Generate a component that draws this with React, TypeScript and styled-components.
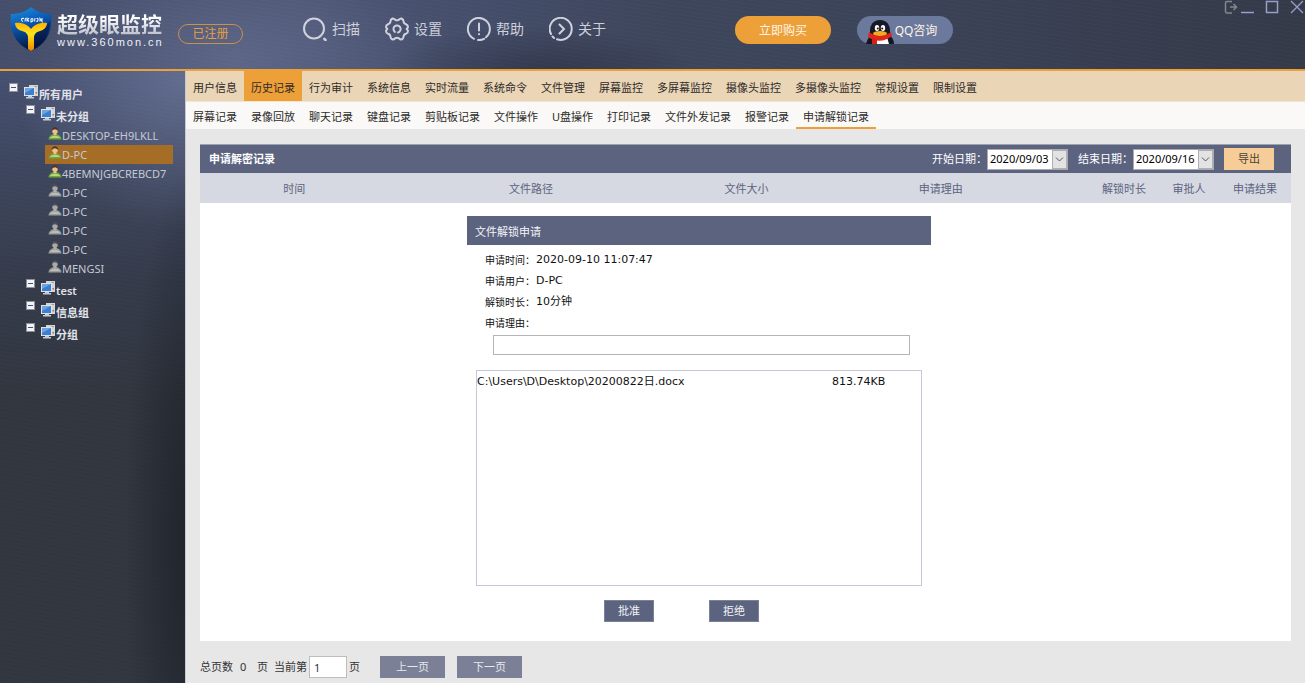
import React from 'react';
import styled, { createGlobalStyle, css } from 'styled-components';

const SANS = '"Noto Sans", "Noto Sans CJK SC", sans-serif';
const WIDE = '"DejaVu Sans", "Noto Sans CJK SC", sans-serif';

const colors = {
  orange: '#ed9f38',
  sand: '#ead5b6',
  slate: '#5c637f',
  paleSlate: '#d6d9e2',
  page: '#e7e7e7',
};

const GlobalStyle = createGlobalStyle`
  * { box-sizing: border-box; }
  body { margin: 0; font-family: ${SANS}; font-size: 11px; line-height: 14px; color: #222; }
  button, input { font: inherit; color: inherit; margin: 0; }
  button { padding: 0; border: 0; background: none; cursor: pointer; }
  ul { list-style: none; margin: 0; padding: 0; }
`;

const Shell = styled.div`
  min-height: 100vh;
  display: flex;
  flex-direction: column;
  background: #323742;
`;

/* ---------- header ---------- */

const Header = styled.header`
  height: 71px;
  display: flex;
  align-items: flex-start;
  border-bottom: 2px solid ${colors.orange};
  background:
    repeating-linear-gradient(8deg, rgba(255, 255, 255, 0.015) 0 1px, transparent 1px 4px),
    radial-gradient(ellipse 200px 110px at 235px 60px, rgba(116, 126, 164, 0.45), transparent),
    radial-gradient(ellipse 160px 50px at 540px 75px, rgba(38, 42, 56, 0.6), transparent),
    linear-gradient(90deg, #454e6a 0, #4b5472 24%, #454e6b 36%, #3e465c 50%, #3c445a 66%, #383e50 84%, #343a48 100%);
`;

const Brand = styled.div`
  display: flex;
  padding: 7px 0 0 10px;
`;

const BrandText = styled.div`
  display: flex;
  flex-direction: column;
  width: 112px;
  margin-left: 5px;
  padding-top: 6px;
  white-space: nowrap;
  color: #f0f1f6;
`;

const BrandName = styled.strong`
  font-size: 21px;
  line-height: 23px;
  font-weight: 700;
  background: linear-gradient(#ffffff 20%, #b9bdc9);
  background-clip: text;
  -webkit-background-clip: text;
  color: transparent;
`;

const BrandUrl = styled.span`
  font: 11px/13px "Liberation Sans", sans-serif;
  letter-spacing: 2px;
`;

const Registered = styled.span`
  width: 65px;
  height: 20px;
  margin: 24px 0 0 9px;
  border: 1px solid #c99247;
  border-radius: 10px;
  color: #e79f42;
  font-size: 12px;
  line-height: 18px;
  text-align: center;
`;

const Nav = styled.nav`
  display: flex;
  gap: 25px;
  margin: 17px 0 0 60px;
`;

const NavLink = styled.a`
  display: flex;
  align-items: center;
  gap: 5px;
  color: #cdd0db;
  font-size: 14px;
  line-height: 24px;
  text-decoration: none;
  white-space: nowrap;
`;

const Actions = styled.div`
  display: flex;
  gap: 26px;
  margin: 16px 0 0 129px;
`;

const Pill = styled.button<{ $blue?: boolean }>`
  display: flex;
  align-items: flex-end;
  justify-content: center;
  width: 96px;
  height: 28px;
  padding-right: ${(p) => (p.$blue ? '8px' : '0')};
  border-radius: 14px;
  background: ${(p) => (p.$blue ? '#6b799c' : colors.orange)};
  color: #fff6e8;
  font-size: 12px;
  line-height: 27px;
  white-space: nowrap;
`;

const WindowControls = styled.div`
  display: flex;
  align-items: flex-start;
  margin-left: auto;
  padding-right: 1px;
`;

const WindowButton = styled.button<{ $gap?: number }>`
  display: flex;
  width: 14px;
  height: 15px;
  margin-left: ${(p) => p.$gap ?? 0}px;
`;

/* ---------- sidebar tree ---------- */

const Body = styled.div`
  flex: 1;
  display: flex;
`;

const Sidebar = styled.aside`
  flex: 0 0 185px;
  padding-top: 11px;
  background:
    radial-gradient(ellipse 70px 380px at 195px 470px, rgba(22, 25, 33, 0.7), transparent),
    repeating-linear-gradient(8deg, rgba(255, 255, 255, 0.012) 0 1px, transparent 1px 4px),
    radial-gradient(ellipse 170px 150px at 185px 10px, rgba(125, 137, 176, 0.5), transparent),
    linear-gradient(180deg, #465070 0, #3c445a 120px, #353b4a 210px, #31363f 330px);
`;

const TreeRow = styled.div<{ $level: number }>`
  display: flex;
  height: 22px;
  padding-left: ${(p) => 9 + p.$level * 17}px;
  color: #e0e2ea;
  font-weight: 600;
`;

const Toggle = styled.button`
  display: flex;
  width: 9px;
  height: 9px;
  margin-top: 1px;
`;

const GroupLabel = styled.span`
  margin: 6px 0 0 1px;
  white-space: nowrap;
`;

const GroupIcon = styled.svg`
  width: 14px;
  height: 14px;
  margin: 3px 0 0 6px;
`;

const UserRow = styled.button<{ $selected?: boolean }>`
  display: flex;
  align-items: center;
  width: 128px;
  height: 19px;
  margin-left: 45px;
  padding: 0 0 0 3px;
  color: #c5c9d4;
  line-height: 19px;
  white-space: nowrap;
  background: ${(p) => (p.$selected ? '#a56d26' : 'none')};
  svg { align-self: flex-start; }
`;

/* ---------- main area ---------- */

const Main = styled.main`
  flex: 1;
  min-width: 0;
  display: flex;
  flex-direction: column;
  border-left: 1px solid #c9cad0;
  background: ${colors.page};
`;

const Tabs = styled.nav<{ $sub?: boolean }>`
  display: flex;
  height: ${(p) => (p.$sub ? '27px' : '31px')};
  background: ${(p) => (p.$sub ? '#faf9f7' : colors.sand)};
  border-bottom: ${(p) => (p.$sub ? '0' : '1px solid #f1e6d6')};
`;

const Tab = styled.a<{ $active?: boolean; $sub?: boolean }>`
  padding: 2px 7px 0;
  color: #2d2b29;
  line-height: ${(p) => (p.$sub ? '25px' : '29px')};
  text-decoration: none;
  white-space: nowrap;
  ${(p) => p.$active && css`
    ${p.$sub ? css`border-bottom: 2px solid ${colors.orange};` : css`background: ${colors.orange};`}
  `}
`;

const Content = styled.div`
  flex: 1;
  display: flex;
  flex-direction: column;
  padding: 15px 14px 5px;
`;

const Panel = styled.section`
  flex: 1;
  background: #fff;
`;

const PanelHead = styled.div`
  display: flex;
  align-items: center;
  height: 29px;
  padding: 0 17px 0 9px;
  border-top: 1px solid #9da2b1;
  background: ${colors.slate};
  color: #fff;
`;

const PanelTitle = styled.h1`
  margin: 0 auto 0 0;
  font-size: 11px;
  font-weight: 700;
`;

const DateField = styled.label`
  display: flex;
  align-items: center;
  margin-right: 10px;
`;

const DateBox = styled.span`
  display: flex;
  width: 81px;
  height: 21px;
  border: 1px solid #a9abb1;
  background: #fff;
  color: #000;
`;

const DateInput = styled.input`
  flex: 1;
  min-width: 0;
  padding: 0 0 0 2px;
  border: 0;
  outline: 0;
  background: none;
`;

const DateButton = styled.button`
  display: flex;
  align-items: center;
  justify-content: center;
  width: 15px;
  border: 1px solid #b0b0b0;
  background: #e3e3e3;
`;

const Export = styled.button`
  width: 50px;
  height: 22px;
  background: #f6cd98;
  color: #4c4434;
`;

const Records = styled.table`
  width: 100%;
  table-layout: fixed;
  border-collapse: collapse;
  th {
    height: 30px;
    padding: 1px 0 0;
    background: ${colors.paleSlate};
    color: ${colors.slate};
    font-weight: 400;
    white-space: nowrap;
  }
`;

const HeadCell = styled.th<{ $width: string; $end?: boolean }>`
  width: ${(p) => p.$width};
  ${(p) => p.$end && css`&& { text-align: right; padding-right: 13px; }`}
`;

const Request = styled.form`
  width: 464px;
  margin: 13px 0 19px 267px;
  color: #111;
`;

const RequestHead = styled.h2`
  height: 29px;
  margin: 0 0 4px;
  padding: 2px 8px 0;
  background: ${colors.slate};
  color: #f2f3f7;
  font-size: 11px;
  line-height: 28px;
  font-weight: 400;
`;

const Facts = styled.dl`
  margin: 0;
  padding-left: 18px;
`;

const Fact = styled.div`
  display: flex;
  height: 21px;
  align-items: center;
  dt { width: 51px; font-size: 10px; white-space: nowrap; }
  dd { margin: 0; font-family: ${WIDE}; }
`;

const Reason = styled.input`
  display: block;
  width: 417px;
  height: 20px;
  margin: 2px 0 15px 26px;
  border: 1px solid #b5b5b5;
  background: #fff;
`;

const FileBox = styled.div`
  height: 216px;
  margin: 0 9px;
  padding-top: 3px;
  border: 1px solid #c6c8da;
  font-family: ${WIDE};
`;

const Files = styled.table`
  width: 100%;
  border-collapse: collapse;
  td { height: 16px; padding: 0; }
  td:last-child { width: 89px; }
`;

const Decisions = styled.div`
  display: flex;
  gap: 55px;
  padding: 14px 0 0 137px;
`;

const Decision = styled.button`
  width: 50px;
  height: 22px;
  border: 1px solid #7b8198;
  background: ${colors.slate};
  color: #f2f3f7;
`;

const Pager = styled.footer`
  display: flex;
  align-items: center;
  height: 22px;
  margin-top: 15px;
  color: #333;
  white-space: nowrap;
`;

const PageCount = styled.span`
  width: 17px;
  margin-left: 7px;
`;

const PageUnit = styled.span`
  margin-right: 6px;
`;

const PageInput = styled.input`
  width: 38px;
  height: 22px;
  margin: 0 2px;
  padding: 0 4px;
  border: 1px solid #bdbdbd;
  background: #fff;
`;

const PageTurn = styled.div`
  display: flex;
  gap: 12px;
  margin-left: 20px;
`;

const PageButton = styled.button`
  width: 65px;
  height: 22px;
  background: #7b8096;
  color: #e6e8ee;
`;

/* ---------- drawings ---------- */

const Shield = () => (
  <svg width="42" height="45" viewBox="0 0 42 45" aria-hidden="true">
    <defs>
      <linearGradient id="shieldBlue" x1="0" y1="0" x2="0.3" y2="1">
        <stop offset="0" stopColor="#2094e0" />
        <stop offset="0.4" stopColor="#0b5fbb" />
        <stop offset="1" stopColor="#05153f" />
      </linearGradient>
      <linearGradient id="shieldGold" x1="0" y1="0" x2="0" y2="1">
        <stop offset="0" stopColor="#ffb000" />
        <stop offset="0.4" stopColor="#ffe61c" />
        <stop offset="1" stopColor="#f08200" />
      </linearGradient>
    </defs>
    <path d="M21 0C15 5 8 7 1 7C-1 24 5 37 21 44C37 37 43 24 41 7C34 7 27 5 21 0Z" fill="url(#shieldBlue)" />
    <path d="M22 27C30 25 36 20 40 14C39 27 34 36 22 43Z" fill="#06103a" opacity="0.5" />
    <path
      d="M5 16C12 15 18 18 21 22C24 18 30 15 37 16C37 20 34 23 30 24C26 25 24 27 24 31V42L21 44L18 42V31C18 27 16 25 12 24C8 23 5 20 5 16Z"
      fill="url(#shieldGold)"
    />
    <path
      d="M14 11.500Q11.500 11 11.500 12.500T13 14.500M15.500 11L15 14.500M17 10.500V14.500M19 11L17.500 13L19 14.500M21 11.500V15.500M21 12Q23 11 23 13T21 14.500M25 11L24.500 14.500M26.500 11.500Q28.500 11 28 13T26.500 14M30 14.500V11.500L32 14.500V11"
      fill="none"
      stroke="#e8f3ff"
      strokeWidth="1.100"
    />
  </svg>
);

const lineProps = { fill: 'none', stroke: '#cfd2dc', strokeWidth: 2, strokeLinecap: 'round' as const };

const NavIcon = ({ kind }: { kind: string }) => (
  <svg width="24" height="24" viewBox="0 0 24 24" aria-hidden="true" {...lineProps}>
    {kind === 'scan' && (
      <>
        <circle cx="11" cy="11.500" r="10" />
        <path d="M21.300 21.800L22.500 23" strokeWidth="2.500" />
      </>
    )}
    {kind === 'settings' && (
      <>
        <path
          strokeLinejoin="round"
          d="M7.500 1.500Q9 1.300 10 2.600Q12 4 14 2.600Q15 1.300 16.500 1.500Q18.500 2.500 18.600 4.500Q18.600 6.500 21 7.200Q23 8 23 10Q22.800 11 21.600 12Q22.800 13 23 14Q23 16 21 16.800Q18.600 17.500 18.600 19.500Q18.500 21.500 16.500 22.500Q15 22.700 14 21.400Q12 20 10 21.400Q9 22.700 7.500 22.500Q5.500 21.500 5.400 19.500Q5.400 17.500 3 16.800Q1 16 1 14Q1.200 13 2.400 12Q1.200 11 1 10Q1 8 3 7.200Q5.400 6.500 5.400 4.500Q5.500 2.500 7.500 1.500Z"
        />
        <path d="M10 15A3.600 3.600 0 1 1 13 15.500" />
      </>
    )}
    {kind === 'help' && (
      <>
        <path d="M19 20.300A11 11 0 1 0 7 21.800M11 23Q14 23.300 17 21.800" />
        <path d="M12 6.500V13.500M12 17V17.200" />
      </>
    )}
    {kind === 'about' && (
      <>
        <path d="M2 17A11 11 0 1 1 8 22.200M3.500 19.500L5 21" />
        <path d="M10.500 7.500L15 12L10.500 16.500" />
      </>
    )}
  </svg>
);

const Penguin = () => (
  <svg width="30" height="25" viewBox="0 0 30 25" aria-hidden="true">
    <path d="M1 25C2 21 4 18 6 15L24 15C27 18 29 21 29 25Z" fill="#141722" />
    <path d="M15 1C8 1 5 6 5 12V17H25V12C25 6 22 1 15 1Z" fill="#171a26" />
    <path d="M8 18H22L24 25H9Z" fill="#fff" />
    <ellipse cx="12" cy="9" rx="2.200" ry="3" fill="#fff" />
    <ellipse cx="18" cy="9" rx="2.200" ry="3" fill="#fff" />
    <circle cx="12.800" cy="9.500" r="1" fill="#111" />
    <circle cx="17.200" cy="9.500" r="1" fill="#111" />
    <path d="M4 13Q15 21 26 13L27 17Q15 26 3 18Z" fill="#e0261c" />
    <path d="M7 19L12 21V25H7Z" fill="#d71f17" />
    <ellipse cx="15" cy="14.500" rx="7" ry="2.600" fill="#f8a91b" />
  </svg>
);

const Computers = () => (
  <GroupIcon viewBox="0 0 14 14" aria-hidden="true">
    <path d="M5 0H14V11H9V3H5Z" fill="#d5d5d3" />
    <path d="M10.500 1.500H13" stroke="#9b9b9b" />
    <rect x="11.500" y="7" width="1.500" height="1.500" fill="#c8683b" />
    <rect x="0.500" y="2.500" width="10" height="8" fill="#3a7fd2" stroke="#dfe3e8" />
    <path d="M1 3H10L1 8Z" fill="#6ba5e6" />
    <path d="M4 11H8V12H10V13.500H2V12H4Z" fill="#c9cccf" />
  </GroupIcon>
);

const Person = ({ online }: { online: boolean }) => (
  <svg width="14" height="14" viewBox="0 0 14 14" aria-hidden="true">
    <path d="M0.500 13.500C0.500 10 4 8 7 8C10 8 13.500 10 13.500 13.500Z" fill={online ? '#72a63a' : '#9b9b99'} />
    <path d="M2.500 11Q7 8.500 11.500 11L12 12H2Z" fill={online ? '#b4d67c' : '#bcbcba'} />
    <path d="M5.500 6H8.500V8.500L7 9.500L5.500 8.500Z" fill={online ? '#edc08a' : '#b1b1b0'} />
    <circle cx="7" cy="5" r="2.800" fill={online ? '#f0bf8b' : '#a9a9a7'} />
    <path d="M3.800 5C3.800 0 10.200 0 10.200 5Q8.500 3.300 7 3.300Q5 3.300 3.800 5Z" fill={online ? '#4d3324' : '#4d5057'} />
  </svg>
);

const Minus = () => (
  <svg width="9" height="9" viewBox="0 0 9 9" aria-hidden="true">
    <rect x="0.500" y="0.500" width="8" height="8" fill="#f4f4f4" stroke="#8d9099" />
    <path d="M2 4.500H7" stroke="#3f4f8c" />
  </svg>
);

const Chevron = () => (
  <svg width="9" height="7" viewBox="0 0 9 7" fill="none" stroke="#555" aria-hidden="true">
    <path d="M1 1.500L4.500 5L8 1.500" />
  </svg>
);

/* ---------- data ---------- */

const navItems = [
  ['scan', '扫描'],
  ['settings', '设置'],
  ['help', '帮助'],
  ['about', '关于'],
];

const users: [string, boolean][] = [
  ['DESKTOP-EH9LKLL', true],
  ['D-PC', true],
  ['4BEMNJGBCREBCD7', true],
  ['D-PC', false],
  ['D-PC', false],
  ['D-PC', false],
  ['D-PC', false],
  ['MENGSI', false],
];

const mainTabs = ['用户信息', '历史记录', '行为审计', '系统信息', '实时流量', '系统命令', '文件管理', '屏幕监控', '多屏幕监控', '摄像头监控', '多摄像头监控', '常规设置', '限制设置'];
const subTabs = ['屏幕记录', '录像回放', '聊天记录', '键盘记录', '剪贴板记录', '文件操作', 'U盘操作', '打印记录', '文件外发记录', '报警记录', '申请解锁记录'];

const columns: [string, string][] = [
  ['时间', '17.3%'],
  ['文件路径', '26.1%'],
  ['文件大小', '13.4%'],
  ['申请理由', '22.2%'],
  ['解锁时长', '8.9%'],
  ['审批人', '5.5%'],
  ['申请结果', '6.6%'],
];

const facts = [
  ['申请时间：', '2020-09-10 11:07:47'],
  ['申请用户：', 'D-PC'],
  ['解锁时长：', '10分钟'],
];

const Group = ({ label, level, children }: { label: string; level: number; children?: React.ReactNode }) => (
  <li>
    <TreeRow $level={level}>
      <Toggle type="button" aria-label={`折叠${label}`}><Minus /></Toggle>
      <Computers />
      <GroupLabel>{label}</GroupLabel>
    </TreeRow>
    {children && <ul>{children}</ul>}
  </li>
);

const DatePicker = ({ label, value }: { label: string; value: string }) => (
  <DateField>
    {label}
    <DateBox>
      <DateInput type="text" defaultValue={value} />
      <DateButton type="button" aria-label="选择日期"><Chevron /></DateButton>
    </DateBox>
  </DateField>
);

export default function App() {
  return (
    <Shell>
      <GlobalStyle />
      <Header>
        <Brand>
          <Shield />
          <BrandText>
            <BrandName>超级眼监控</BrandName>
            <BrandUrl>www.360mon.cn</BrandUrl>
          </BrandText>
        </Brand>
        <Registered>已注册</Registered>
        <Nav>
          {navItems.map(([kind, label]) => (
            <NavLink key={kind} href="#"><NavIcon kind={kind} />{label}</NavLink>
          ))}
        </Nav>
        <Actions>
          <Pill type="button">立即购买</Pill>
          <Pill type="button" $blue><Penguin />QQ咨询</Pill>
        </Actions>
        <WindowControls>
          <WindowButton type="button" aria-label="退出">
            <svg width="14" height="15" fill="none" stroke="#85868d" strokeWidth="1.500">
              <path d="M8 1.500H3Q1.500 1.500 1.500 3V11.500Q1.500 13 3 13H8M6 7H12M9.500 4L12.500 7L9.500 10" />
            </svg>
          </WindowButton>
          <WindowButton type="button" aria-label="最小化" $gap={3}>
            <svg width="14" height="15"><path d="M0 12.500H13" stroke="#96a0ca" strokeWidth="1.500" /></svg>
          </WindowButton>
          <WindowButton type="button" aria-label="最大化" $gap={10}>
            <svg width="14" height="15"><rect x="1.500" y="1.500" width="11" height="11" fill="none" stroke="#96a0ca" strokeWidth="1.500" /></svg>
          </WindowButton>
          <WindowButton type="button" aria-label="关闭" $gap={11}>
            <svg width="14" height="15"><path d="M1 1L13 13M13 1L1 13" stroke="#96a0ca" strokeWidth="1.300" /></svg>
          </WindowButton>
        </WindowControls>
      </Header>

      <Body>
        <Sidebar>
          <ul>
            <Group label="所有用户" level={0}>
              <Group label="未分组" level={1}>
                {users.map(([name, online], i) => (
                  <li key={i}>
                    <UserRow type="button" $selected={i === 1}>
                      <Person online={online} />
                      {name}
                    </UserRow>
                  </li>
                ))}
              </Group>
              <Group label="test" level={1} />
              <Group label="信息组" level={1} />
              <Group label="分组" level={1} />
            </Group>
          </ul>
        </Sidebar>

        <Main>
          <Tabs>
            {mainTabs.map((t) => <Tab key={t} href="#" $active={t === '历史记录'}>{t}</Tab>)}
          </Tabs>
          <Tabs $sub>
            {subTabs.map((t) => <Tab key={t} href="#" $sub $active={t === '申请解锁记录'}>{t}</Tab>)}
          </Tabs>

          <Content>
            <Panel>
              <PanelHead>
                <PanelTitle>申请解密记录</PanelTitle>
                <DatePicker label="开始日期：" value="2020/09/03" />
                <DatePicker label="结束日期：" value="2020/09/16" />
                <Export type="button">导出</Export>
              </PanelHead>
              <Records>
                <thead>
                  <tr>
                    {columns.map(([name, width]) => (
                      <HeadCell key={name} scope="col" $width={width} $end={name === '解锁时长'}>{name}</HeadCell>
                    ))}
                  </tr>
                </thead>
              </Records>

              <Request onSubmit={(e) => e.preventDefault()}>
                <RequestHead>文件解锁申请</RequestHead>
                <Facts>
                  {facts.map(([k, v]) => (
                    <Fact key={k}><dt>{k}</dt><dd>{v}</dd></Fact>
                  ))}
                  <Fact><dt><label htmlFor="reason">申请理由：</label></dt></Fact>
                </Facts>
                <Reason id="reason" type="text" />
                <FileBox>
                  <Files>
                    <tbody>
                      <tr><td>C:\Users\D\Desktop\20200822日.docx</td><td>813.74KB</td></tr>
                    </tbody>
                  </Files>
                </FileBox>
                <Decisions>
                  <Decision type="button">批准</Decision>
                  <Decision type="button">拒绝</Decision>
                </Decisions>
              </Request>
            </Panel>

            <Pager>
              总页数
              <PageCount>0</PageCount>
              <PageUnit>页</PageUnit>
              <label htmlFor="page">当前第</label>
              <PageInput id="page" type="text" defaultValue="1" />
              页
              <PageTurn>
                <PageButton type="button">上一页</PageButton>
                <PageButton type="button">下一页</PageButton>
              </PageTurn>
            </Pager>
          </Content>
        </Main>
      </Body>
    </Shell>
  );
}
